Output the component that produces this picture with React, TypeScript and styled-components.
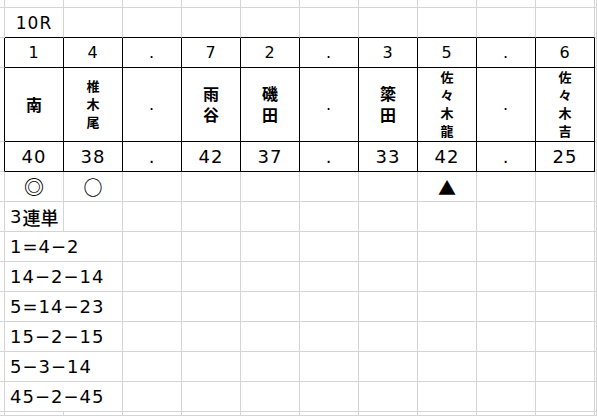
import React from 'react'
import styled, { createGlobalStyle } from 'styled-components'

const GlobalStyle = createGlobalStyle`
  html, body {
    margin: 0;
    padding: 0;
    background: #ffffff;
  }
`

const GRID = '#d4d4d4'
const INK = '#000000'

const Sheet = styled.div`
  display: grid;
  grid-template-columns: 5px repeat(10, 59px) 1fr;
  grid-template-rows: 8px 30px 30px 74px 30px 30px 30px repeat(6, 30px) 1fr;
  width: 597px;
  height: 416px;
  overflow: hidden;
  background: #ffffff;
  color: #000000;
  font-family: 'DejaVu Sans', 'Noto Sans CJK JP', sans-serif;
`

type Line = 'grid' | 'ink'

const Cell = styled.div<{ $right?: Line; $bottom?: Line; $align?: 'left' | 'center'; $span?: number; $size?: number }>`
  box-sizing: border-box;
  display: flex;
  align-items: center;
  justify-content: ${(p) => (p.$align === 'left' ? 'flex-start' : 'center')};
  padding: ${(p) => (p.$align === 'left' ? '0 0 0 5px' : '0')};
  grid-column: span ${(p) => p.$span ?? 1};
  border-right: 1px solid ${(p) => (p.$right === 'ink' ? INK : GRID)};
  border-bottom: 1px solid ${(p) => (p.$bottom === 'ink' ? INK : GRID)};
  font-size: ${(p) => p.$size ?? 18}px;
  white-space: nowrap;
  letter-spacing: 1px;
`

const Mark = styled.span<{ $size: number }>`
  font-family: 'Noto Sans CJK JP', sans-serif;
  font-size: ${(p) => p.$size}px;
  font-weight: 700;
  line-height: 1;
  letter-spacing: 0;
`

// vertical name, stacked one character per line like a narrow wrapped cell
const Name = styled.span<{ $small?: boolean }>`
  writing-mode: vertical-rl;
  text-orientation: upright;
  font-family: 'Noto Sans CJK JP', sans-serif;
  font-weight: 700;
  font-size: ${(p) => (p.$small ? 13 : 16)}px;
  letter-spacing: 5px;
  line-height: 1;
  margin-bottom: -5px;
`

const Kanji = styled.span`
  font-family: 'Noto Sans CJK JP', sans-serif;
  font-weight: 500;
  letter-spacing: 0;
`

const numbers = ['1', '4', '.', '7', '2', '.', '3', '5', '.', '6']
const names = ['南', '椎木尾', '.', '雨谷', '磯田', '.', '簗田', '佐々木龍', '.', '佐々木吉']
const scores = ['40', '38', '.', '42', '37', '.', '33', '42', '.', '25']
const marks = ['◎', '○', '', '', '', '', '', '▲', '', '']
const bets = ['1=4−2', '14−2−14', '5=14−23', '15−2−15', '5−3−14', '45−2−45']

const markSize: Record<string, number> = { '◎': 20, '○': 19, '▲': 18 }

const cols = Array.from({ length: 10 }, (_, i) => i)

function BlankRow() {
  return (
    <>
      {Array.from({ length: 12 }, (_, i) => (
        <Cell key={i} />
      ))}
    </>
  )
}

function TableRow({ values, size, render }: { values: string[]; size: number; render?: (v: string) => React.ReactNode }) {
  return (
    <>
      <Cell $right="ink" />
      {values.map((v, i) => (
        <Cell key={i} $right="ink" $bottom="ink" $size={size}>
          {render ? render(v) : v}
        </Cell>
      ))}
      <Cell />
    </>
  )
}

export default function App() {
  return (
    <>
      <GlobalStyle />
      <Sheet>
        <BlankRow />

        <Cell />
        <Cell $bottom="ink" $size={17}>10R</Cell>
        {cols.slice(1).map((i) => (
          <Cell key={i} $bottom="ink" />
        ))}
        <Cell />

        <TableRow values={numbers} size={16} />
        <TableRow
          values={names}
          size={16}
          render={(v) => (v === '.' ? v : <Name $small={v.length > 2}>{v}</Name>)}
        />
        <TableRow values={scores} size={18} />

        <Cell />
        {marks.map((m, i) => (
          <Cell key={i}>{m && <Mark $size={markSize[m]}>{m}</Mark>}</Cell>
        ))}
        <Cell />

        <Cell />
        <Cell $align="left">
          3<Kanji>連単</Kanji>
        </Cell>
        {cols.slice(1).map((i) => (
          <Cell key={i} />
        ))}
        <Cell />

        {bets.map((b) => (
          <React.Fragment key={b}>
            <Cell />
            <Cell $align="left" $span={2}>
              {b}
            </Cell>
            {cols.slice(2).map((i) => (
              <Cell key={i} />
            ))}
            <Cell />
          </React.Fragment>
        ))}

        <BlankRow />
      </Sheet>
    </>
  )
}
